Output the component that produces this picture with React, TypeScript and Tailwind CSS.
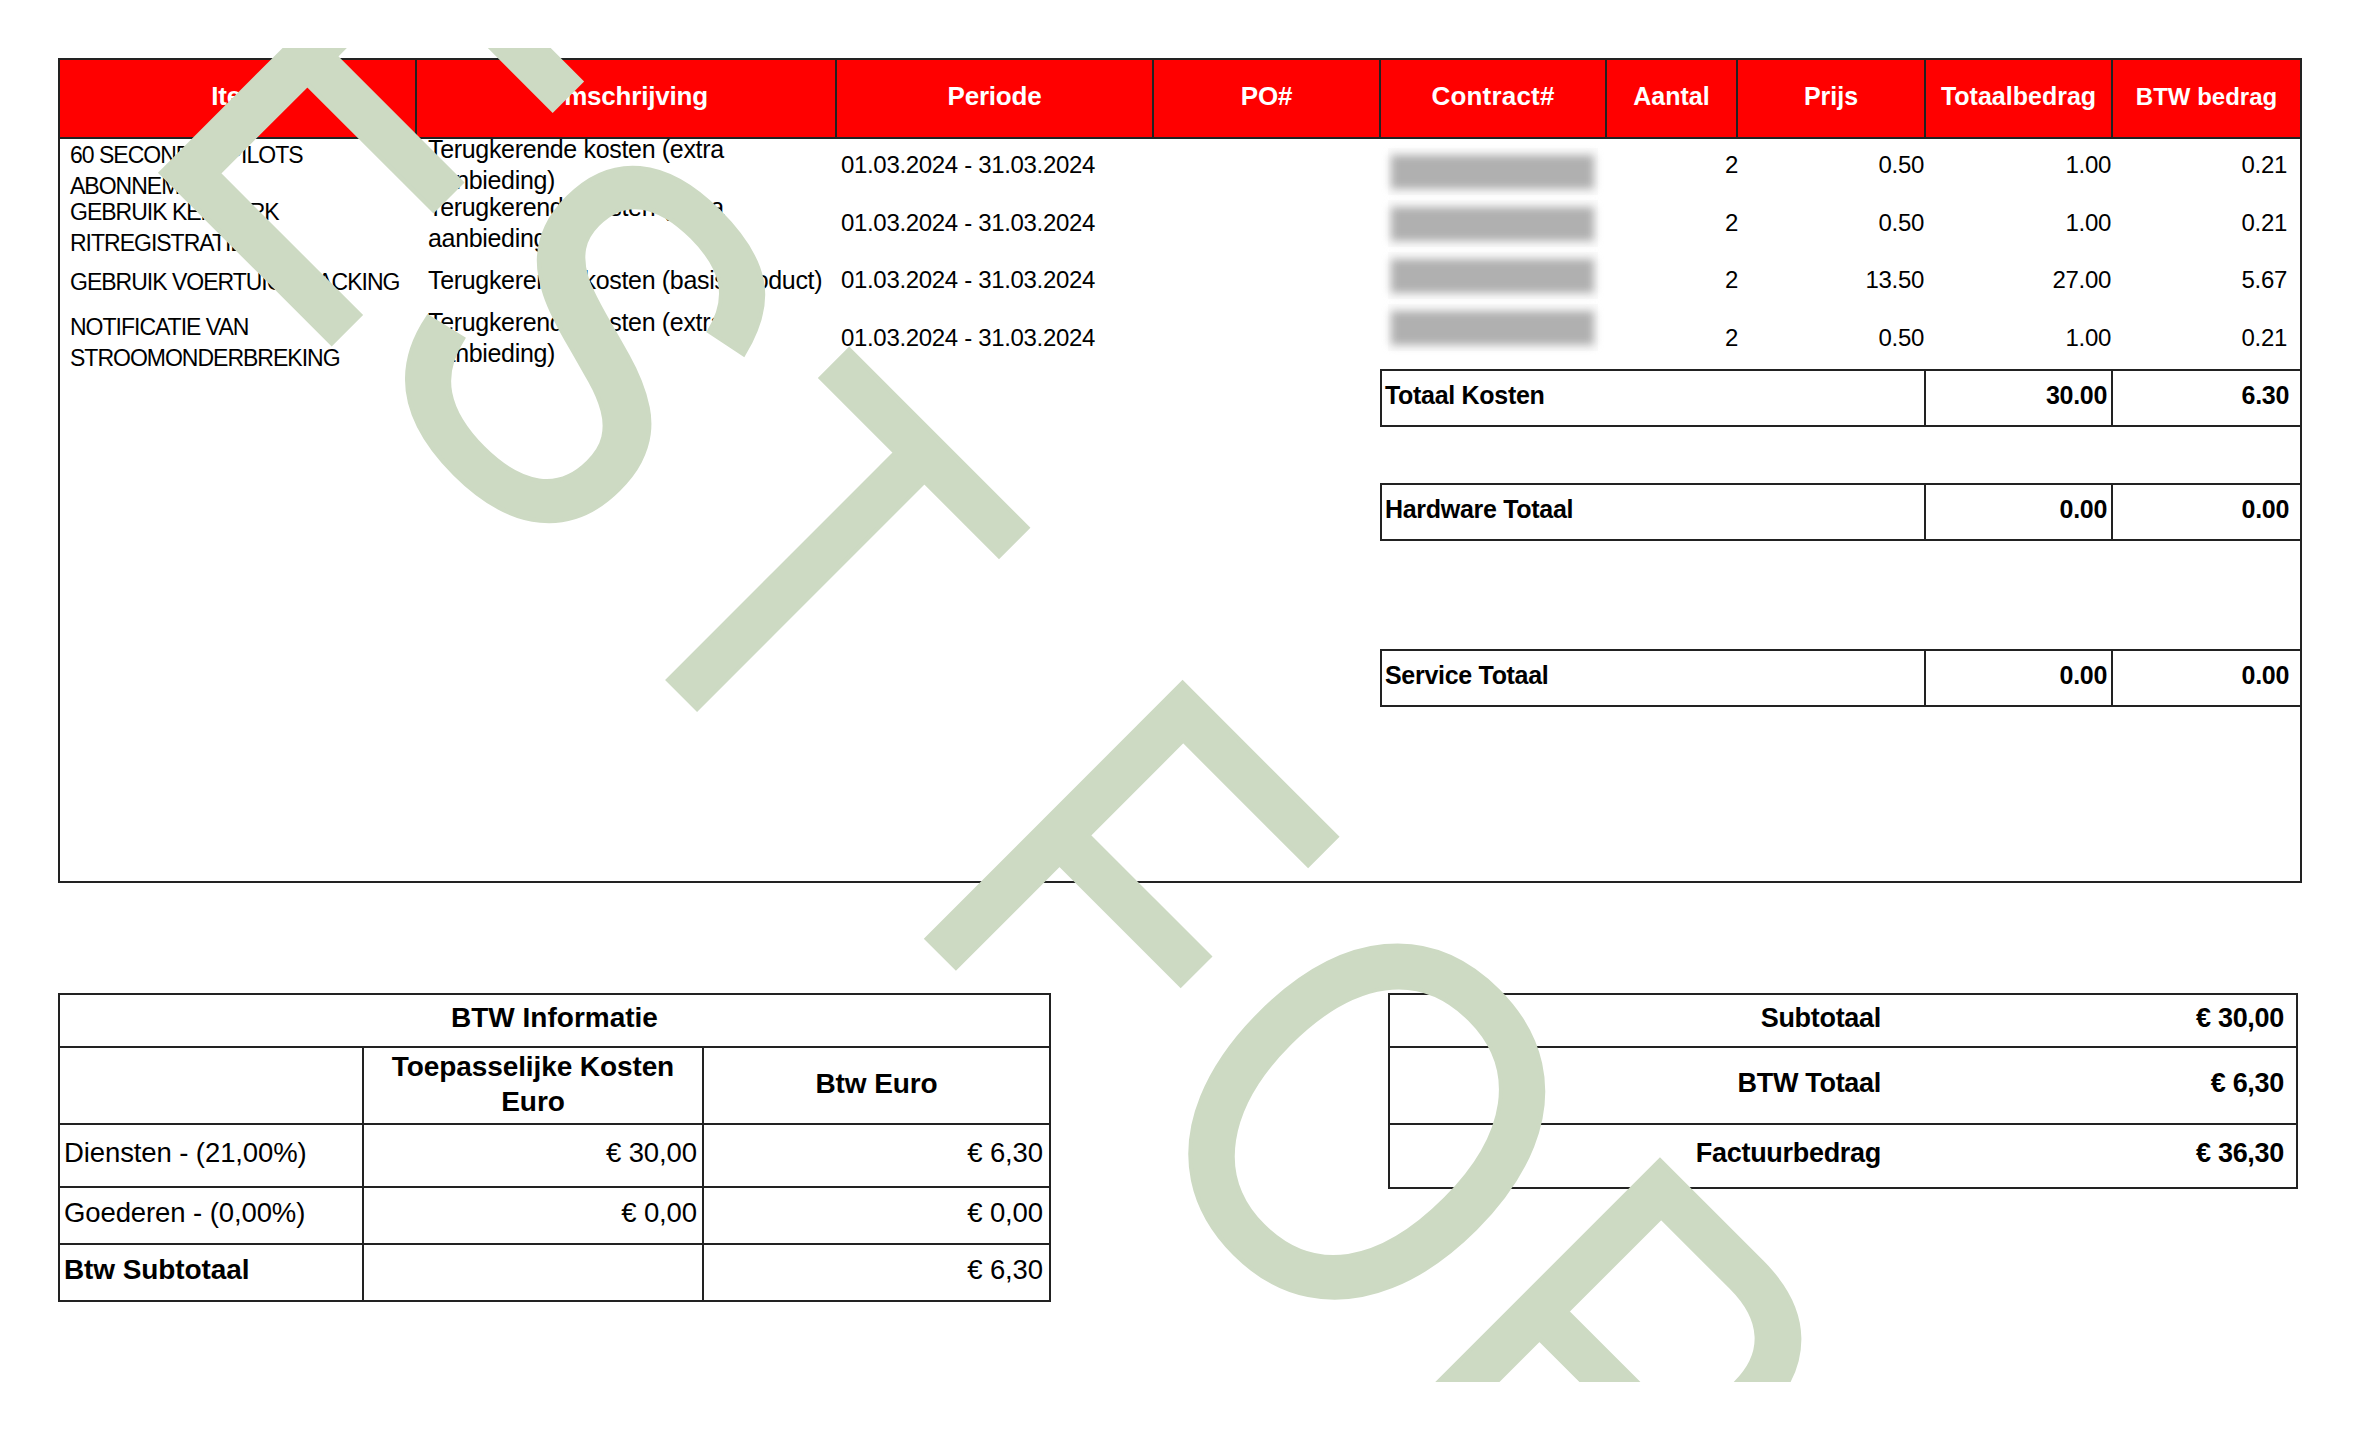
const F = "[font-family:'Liberation_Sans',Arial,sans-serif]";

const headers: [string, string][] = [
  ["Item", "text-[26px] tracking-[-0.2px]"],
  ["Omschrijving", "text-[26px] tracking-[-0.2px]"],
  ["Periode", "text-[26px] tracking-[-0.2px]"],
  ["PO#", "text-[26px] tracking-[-0.2px]"],
  ["Contract#", "text-[26px] tracking-[0.2px]"],
  ["Aantal", "text-[25px]"],
  ["Prijs", "text-[25px]"],
  ["Totaalbedrag", "text-[25px]"],
  ["BTW bedrag", "text-[24px]"],
];

const rows = [
  { item: "60 SECONDEN PILOTS ABONNEMENT", ip: "pt-[6px]", desc: "Terugkerende kosten (extra aanbieding)", bar: "mt-[8px]", q: "2", p: "0.50", t: "1.00", b: "0.21" },
  { item: "GEBRUIK KENMERK RITREGISTRATIE", ip: "pt-[5px]", desc: "Terugkerende kosten (extra aanbieding)", bar: "mb-[3px]", q: "2", p: "0.50", t: "1.00", b: "0.21" },
  { item: "GEBRUIK VOERTUIG TRACKING", ip: "pb-[1px]", desc: "Terugkerende kosten (basis product)", bar: "mb-[14px]", q: "2", p: "13.50", t: "27.00", b: "5.67" },
  { item: "NOTIFICATIE VAN STROOMONDERBREKING", ip: "pt-[5px]", desc: "Terugkerende kosten (extra aanbieding)", bar: "mb-[25px]", q: "2", p: "0.50", t: "1.00", b: "0.21" },
];

const COLS = "grid grid-cols-[357px_420px_317px_227px_226px_131px_188px_187px_187px]";

function Num({ v, cls = "" }: { v: string; cls?: string }) {
  return <div className={`flex items-center justify-end pb-[5px] ${cls}`}>{v}</div>;
}

function Total({ label, a, b, cls }: { label: string; a: string; b: string; cls: string }) {
  return (
    <div className={`h-[58px] border-y-2 border-l-2 border-[#222] grid grid-cols-[544px_187px_187px] font-bold text-[25px] tracking-[-0.3px] text-black ${cls}`}>
      <div className="border-r-2 border-[#222] flex items-center pl-[3px] pb-[5px]">{label}</div>
      <div className="border-r-2 border-[#222] flex items-center justify-end pr-[4px] pb-[5px]">{a}</div>
      <div className="flex items-center justify-end pr-[11px] pb-[5px]">{b}</div>
    </div>
  );
}

export default function App() {
  return (
    <div className={`relative w-[2367px] h-[1430px] bg-white overflow-hidden text-black ${F}`}>
      <div className="pt-[58px] px-[58px]">
        <div className="w-[2244px] h-[825px] border-2 border-[#222]">
          <div className={`${COLS} h-[79px] bg-[#ff0000] border-b-2 border-[#222] text-white font-bold`}>
            {headers.map(([h, c], i) => (
              <div key={h} className={`flex items-center justify-center pb-[4px] ${i < 8 ? "border-r-2 border-[#222]" : ""} ${c}`}>
                {h}
              </div>
            ))}
          </div>
          {rows.map((r, i) => (
            <div key={i} className={`${COLS} grid-rows-[57.5px] h-[57.5px] text-[24px] tracking-[-0.33px]`}>
              <div className={`flex items-center pl-[10px] text-[23px] leading-[31px] tracking-[-1px] ${r.ip}`}>
                <span>{r.item}</span>
              </div>
              <div className="flex items-center pl-[11px] text-[25px] leading-[31px] pb-[5px]">
                <span>{r.desc}</span>
              </div>
              <div className="flex items-center pl-[4px] pb-[5px]">01.03.2024 - 31.03.2024</div>
              <div />
              <div className="flex items-center justify-center pr-[3px]">
                <div className={`w-[210px] h-[47px] bg-[#fbfbfb] flex items-center justify-center shrink-0 ${r.bar}`}>
                  <div className="w-[203px] h-[34px] bg-[#b0b0b0] blur-[4px]" />
                </div>
              </div>
              <Num v={r.q} />
              <Num v={r.p} cls="pr-[2px]" />
              <Num v={r.t} cls="pr-[2px]" />
              <Num v={r.b} cls="pr-[13px]" />
            </div>
          ))}
          <div className="ml-[1320px] w-[920px]">
            <Total label="Totaal Kosten" a="30.00" b="6.30" cls="" />
            <Total label="Hardware Totaal" a="0.00" b="0.00" cls="mt-[56px]" />
            <Total label="Service Totaal" a="0.00" b="0.00" cls="mt-[108px]" />
          </div>
        </div>

        <div className="flex items-start mt-[110px]">
          <div className="w-[993px] border-2 border-[#222] text-[27.5px] tracking-[-0.1px]">
            <div className="h-[53px] border-b-2 border-[#222] flex items-center justify-center pb-[5px] font-bold text-[28px] tracking-normal">BTW Informatie</div>
            <div className="h-[77px] border-b-2 border-[#222] grid grid-cols-[304px_340px_345px] font-bold text-[28px] leading-[35px] text-center">
              <div className="border-r-2 border-[#222]" />
              <div className="border-r-2 border-[#222] flex items-center justify-center pb-[4px] px-[10px]">Toepasselijke Kosten Euro</div>
              <div className="flex items-center justify-center pb-[5px]">Btw Euro</div>
            </div>
            <div className="h-[63px] border-b-2 border-[#222] grid grid-cols-[304px_340px_345px]">
              <div className="border-r-2 border-[#222] flex items-center pl-[4px] pb-[5px]">Diensten - (21,00%)</div>
              <div className="border-r-2 border-[#222] flex items-center justify-end pr-[5px] pb-[5px]">€ 30,00</div>
              <div className="flex items-center justify-end pr-[6px] pb-[5px]">€ 6,30</div>
            </div>
            <div className="h-[57px] border-b-2 border-[#222] grid grid-cols-[304px_340px_345px]">
              <div className="border-r-2 border-[#222] flex items-center pl-[4px] pb-[5px]">Goederen - (0,00%)</div>
              <div className="border-r-2 border-[#222] flex items-center justify-end pr-[5px] pb-[5px]">€ 0,00</div>
              <div className="flex items-center justify-end pr-[6px] pb-[5px]">€ 0,00</div>
            </div>
            <div className="h-[55px] grid grid-cols-[304px_340px_345px]">
              <div className="border-r-2 border-[#222] flex items-center pl-[4px] pb-[6px] font-bold text-[28px]">Btw Subtotaal</div>
              <div className="border-r-2 border-[#222]" />
              <div className="flex items-center justify-end pr-[6px] pb-[6px]">€ 6,30</div>
            </div>
          </div>

          <div className="ml-[337px] w-[910px] border-2 border-[#222] font-bold text-[27px] tracking-[-0.3px]">
            {[
              ["Subtotaal", "€ 30,00", "h-[53px] border-b-2 pb-[4px]"],
              ["BTW Totaal", "€ 6,30", "h-[77px] border-b-2 pb-[4px]"],
              ["Factuurbedrag", "€ 36,30", "h-[62px] pb-[6px]"],
            ].map(([l, v, c]) => (
              <div key={l} className={`grid grid-cols-[494px_412px] items-center border-[#222] ${c}`}>
                <div className="text-right pr-[3px]">{l}</div>
                <div className="text-right pr-[12px]">{v}</div>
              </div>
            ))}
          </div>
        </div>
      </div>

      <div className="absolute left-[70px] right-0 top-[48px] h-[1334px] overflow-hidden pointer-events-none">
        <span className="absolute left-[158.5px] top-[-435.5px] origin-top-left rotate-45 scale-x-[0.95] scale-y-[1.118] whitespace-pre text-[470px] leading-none tracking-[25px] [word-spacing:9px] [-webkit-text-stroke:4px_#cddac3] text-[#cddac3]">
          <span className="tracking-[40px]">T</span>
          <span className="tracking-[10px]">E</span>
          <span className="tracking-[35px]">S</span>
          T <span className="tracking-[33px]">F</span>OR
        </span>
      </div>
    </div>
  );
}
